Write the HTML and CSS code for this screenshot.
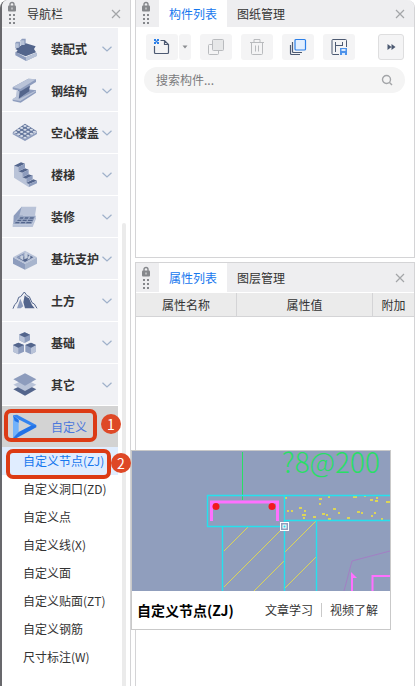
FILE: index.html
```html
<!DOCTYPE html>
<html lang="zh-CN">
<head>
<meta charset="utf-8">
<meta name="viewport" content="width=device-width, initial-scale=1">
<title>导航栏</title>
<link rel="stylesheet" href="styles.css">
</head>
<body>
<svg class="defs" aria-hidden="true">
  <symbol id="grip" viewBox="0 0 10 24">
    <path d="M3 5V3.500a2 2 0 0 1 4 0V5" fill="none" stroke="#85878b" stroke-width="1.400"/>
    <rect x="1" y="4.500" width="8" height="6" rx="1" fill="#85878b"/>
    <rect x="4.500" y="6.500" width="1" height="2" fill="#eee"/>
    <path d="M2 13h2v2H2zM6 13h2v2H6zM2 17h2v2H2zM6 17h2v2H6zM2 21h2v2H2zM6 21h2v2H6z" fill="#85878b"/>
  </symbol>
  <symbol id="close" viewBox="0 0 10 10">
    <path d="M1 1l8 8M9 1l-8 8" fill="none" stroke="#a3a5a8" stroke-width="1.200"/>
  </symbol>
  <symbol id="chevron" viewBox="0 0 10 6">
    <path d="M.5.7 5 5 9.500.7" fill="none" stroke="#9fb1ca" stroke-width="1.200"/>
  </symbol>
</svg>

<div class="app">
  <aside class="sidebar">
    <header class="bar">
      <svg class="grip"><use href="#grip"/></svg>
      <h2 class="bar-title">导航栏</h2>
      <button class="close" aria-label="关闭"><svg><use href="#close"/></svg></button>
    </header>
    <div class="scroll">
      <nav class="nav">
        <button class="item">
          <svg class="icon" viewBox="0 0 78 78">
            <path d="M10 47l31 17 33-14v10L42 75 10 58z" fill="#8d9cbd"/><path d="M42 64l32-14v10L42 75z" fill="#b7c2d7"/>
            <path d="M10 39l29-18 32 10-5 8 6 10-31 12-29-12 5-6z" fill="#53658c"/>
            <path d="M9 22l4-5h11v13l-3 5H9z" fill="#8d9cbd"/><path d="M9 22h11v13H9z" fill="#b7c2d7"/>
            <path d="M26 13l4-5h11v14l-3 5H26z" fill="#8d9cbd"/><path d="M26 13h11v14H26z" fill="#b7c2d7"/>
          </svg><span>装配式</span><svg class="chev"><use href="#chevron"/></svg>
        </button>
        <button class="item">
          <svg class="icon" viewBox="0 0 78 78">
            <path d="M2 64l46-30 24 3v7L26 74 2 69z" fill="#8d9cbd"/>
            <path d="M18 33l34-18v25L18 62z" fill="#53658c"/><path d="M30 36l25-13-7 17-30 24z" fill="#53658c"/>
            <path d="M2 28L49 2l23 2v8L26 40 2 34z" fill="#8d9cbd"/><path d="M2 28L49 2l23 2-47 29z" fill="#b9c3d8"/>
            <path d="M14 38l9 2-3 24-9-2z" fill="#b9c3d8"/><path d="M2 63l9-5 10 5 49-25 2 2-47 29-23-4z" fill="#b9c3d8"/>
          </svg><span>钢结构</span><svg class="chev"><use href="#chevron"/></svg>
        </button>
        <button class="item">
          <svg class="icon" viewBox="0 0 78 78">
            <path d="M2 38l37 19 36-21v6L39 63 2 43z" fill="#8d9cbd"/>
            <path d="M2 37l37-26 36 23-36 24z" fill="#65779d"/>
            <g fill="#d5dce8"><ellipse cx="39" cy="18" rx="5" ry="3"/><ellipse cx="29" cy="24" rx="5" ry="3"/><ellipse cx="49" cy="23" rx="5" ry="3"/><ellipse cx="20" cy="30" rx="5" ry="3"/><ellipse cx="39" cy="29" rx="5" ry="3"/><ellipse cx="58" cy="29" rx="5" ry="3"/><ellipse cx="11" cy="37" rx="5" ry="3"/><ellipse cx="29" cy="36" rx="5" ry="3"/><ellipse cx="48" cy="35" rx="5" ry="3"/><ellipse cx="67" cy="35" rx="5" ry="3"/><ellipse cx="20" cy="43" rx="5" ry="3"/><ellipse cx="39" cy="41" rx="5" ry="3"/><ellipse cx="58" cy="41" rx="5" ry="3"/><ellipse cx="29" cy="48" rx="5" ry="3"/><ellipse cx="48" cy="47" rx="5" ry="3"/><ellipse cx="39" cy="53" rx="5" ry="3"/></g>
          </svg><span>空心楼盖</span><svg class="chev"><use href="#chevron"/></svg>
        </button>
        <button class="item">
          <svg class="icon" viewBox="0 0 78 78">
            <path d="M6 11l13 4v13l12 4v14l12 3v13l8 2v12L6 47z" fill="#b9c3d8"/>
            <path d="M6 11L27 1l12 4-20 10zM19 28l20-9 11 4-19 9zM31 46l19-9 12 4-19 9zM43 62l21-10 11 4-24 10z" fill="#53658c"/>
            <path d="M19 15l20-10v14l-20 9zM31 32l19-9v14l-19 9zM43 49l19-9v12l-19 10zM51 66l24-10v8L51 75z" fill="#8d9cbd"/>
          </svg><span>楼梯</span><svg class="chev"><use href="#chevron"/></svg>
        </button>
        <button class="item">
          <svg class="icon" viewBox="0 0 78 78">
            <path d="M5 35L29 8l4 2v25L4 59z" fill="#8d9cbd"/><path d="M29 8h44l-4 27H22z" fill="#b9c3d8"/>
            <path d="M22 35h50L60 61H2z" fill="#9aa8c4"/><path d="M2 61h58l12-26v9L62 69H2z" fill="#b9c3d8"/>
            <path d="M25 40h10l-2 4H22zM39 40h11l-2 4H37zM54 40h12l-2 4H52zM18 47h11l-2 4H15zM33 47h12l-2 4H31zM49 47h14l-2 4H47zM11 54h12l-2 4H9zM28 54h12l-2 4H26zM44 54h15l-2 4H42z" fill="#53658c"/>
          </svg><span>装修</span><svg class="chev"><use href="#chevron"/></svg>
        </button>
        <button class="item">
          <svg class="icon" viewBox="0 0 78 78">
            <path d="M3 34l36 19v18L3 53z" fill="#8d9cbd"/><path d="M75 34L39 53v18l36-18z" fill="#a8b5cd"/>
            <path d="M3 34l36-20 36 20-36 20z" fill="#b9c3d8"/><path d="M14 34l25-13 25 13-25 14z" fill="#53658c"/>
            <path d="M14 34l25-13v9L20 39z" fill="#8d9cbd"/>
            <path d="M25 31l5-3 4 3v12l-9-5zM37 22l6-3 4 3v14l-10 4zM50 29l5-2v10l-9 5z" fill="#c7d0df"/>
          </svg><span>基坑支护</span><svg class="chev"><use href="#chevron"/></svg>
        </button>
        <button class="item">
          <svg class="icon" viewBox="0 0 78 78">
            <path d="M3 62l5-12 7-7 5-15 6-2 11-14 8 11 7 3 8 18 7 4 8 13" fill="none" stroke="#53658c" stroke-width="3"/>
            <path d="M15 61l10-29 9 23-8 6z" fill="#8d9cbd"/><path d="M38 22l7 6 6 3 9 20 8 10H39l-5-18z" fill="#53658c"/>
          </svg><span>土方</span><svg class="chev"><use href="#chevron"/></svg>
        </button>
        <button class="item">
          <svg class="icon" viewBox="0 0 78 78">
            <path d="M22 13L38 7l16 7v17l-16 8-16-8zM3 45l16-7 17 7v20l-17 8-16-8zM40 45l17-7 15 7v20l-15 8-17-8z" fill="#8d9cbd"/>
            <path d="M22 14l16 8v17l-16-8zM3 45l16 8v20L3 65zM72 45l-15 8v20l15-8z" fill="#b9c3d8"/>
            <path d="M22 14l16-7 16 7-16 8zM3 45l16-7 17 7-17 8zM40 45l17-7 15 7-15 8z" fill="#53658c"/>
          </svg><span>基础</span><svg class="chev"><use href="#chevron"/></svg>
        </button>
        <button class="item">
          <svg class="icon" viewBox="0 0 78 78">
            <path d="M4 52l35-17 34 17-34 19z" fill="#53658c"/><path d="M4 38l35-17 34 17-34 19z" fill="#b9c3d8"/>
            <path d="M4 22L39 4l34 18-34 19z" fill="#8d9cbd"/>
          </svg><span>其它</span><svg class="chev"><use href="#chevron"/></svg>
        </button>
        <div class="group">
          <button class="item open" aria-expanded="true">
            <svg class="icon" viewBox="0 0 78 78">
              <path d="M3 4l17 14v36L3 72z" fill="#72b2fb"/><path d="M3 4l12-2 58 31-14 3-40-20z" fill="#3484ef"/>
              <path d="M3 72l17-18 39-20 14-1v7L14 72z" fill="#2273e7"/><path d="M3 4l17 14v8L8 21z" fill="#2273e7"/>
            </svg><span>自定义</span>
          </button>
          <span class="ring" aria-hidden="true"></span><span class="step">1</span>
        </div>
      </nav>
      <ul class="sub">
        <li class="current">
          <a href="#">自定义节点(ZJ)</a>
          <span class="ring" aria-hidden="true"></span><span class="step">2</span>
          <section class="popup">
            <svg class="drawing" viewBox="0 0 258 140" role="img" aria-label="自定义节点(ZJ)">
              <rect width="258" height="140" fill="#909ebd"/>
              <text class="cad" x="150" y="22">?8@200</text>
              <g fill="none" stroke="#dcd558">
                <path d="M92 100l24-24M92 136l58-58M122 140l30-30M153 101l31-31M153 137l31-31"/>
              </g>
              <g fill="none" stroke="#dcd558" stroke-width="2">
                <path d="M153 47h2M187 48h3M196 46h2M221 46h4M232 45h2M238 49h3M243 50h3M244 47h2M254 51h4M187 53h2M167 57h3M155 60h2M159 60h2M201 58h3M190 63h3M194 64h2M170 64h4M172 60h2M171 67h2M181 66h3M196 68h3M206 62h2M215 67h3M225 61h3M229 62h2M239 65h2M242 62h2M249 68h2"/>
              </g>
              <path d="M110.500 1v48" stroke="#28df65" fill="none"/>
              <path d="M152.500 75.500H75.500v-31H258M152.500 44.500V140M153 69.500h105M90.500 76v64M184.500 70v70" fill="none" stroke="#25e1ed" stroke-width="1.400"/>
              <path d="M79.500 70V51H145.500v19" fill="none" stroke="#ff70ff" stroke-width="3"/>
              <circle cx="84" cy="55.500" r="3.500" fill="#f2181f"/><circle cx="140" cy="55.500" r="3.500" fill="#f2181f"/>
              <path d="M212 140l8-30 38-10" fill="none" stroke="#a27fc4"/>
              <path d="M220 140v-14M240.500 140v-15H258" fill="none" stroke="#ff70ff" stroke-width="2"/>
              <path d="M219 121l6 6h-6z" fill="#ff70ff"/>
              <rect x="148.500" y="71.500" width="8" height="8" fill="#909ebd" stroke="#fff"/><rect x="151" y="74" width="3" height="3" fill="#25e1ed" stroke="#fff"/>
            </svg>
            <footer class="popup-foot">
              <strong>自定义节点(ZJ)</strong>
              <a href="#">文章学习</a>
              <a href="#">视频了解</a>
            </footer>
          </section>
        </li>
        <li><a href="#">自定义洞口(ZD)</a></li>
        <li><a href="#">自定义点</a></li>
        <li><a href="#">自定义线(X)</a></li>
        <li><a href="#">自定义面</a></li>
        <li><a href="#">自定义贴面(ZT)</a></li>
        <li><a href="#">自定义钢筋</a></li>
        <li><a href="#">尺寸标注(W)</a></li>
      </ul>
      <span class="thumb" aria-hidden="true"></span>
    </div>
  </aside>

  <main class="main">
    <section class="panel components">
      <header class="bar">
        <svg class="grip"><use href="#grip"/></svg>
        <button class="tab active">构件列表</button>
        <button class="tab">图纸管理</button>
        <button class="close" aria-label="关闭"><svg><use href="#close"/></svg></button>
      </header>
      <div class="tools">
        <div class="split">
          <button class="tool" aria-label="新建">
            <svg viewBox="0 0 18 18"><path d="M7.500 2.500h4l4 4v8a1 1 0 0 1-1 1h-12a1 1 0 0 1-1-1V8M11.500 2.500v4h4" fill="none" stroke="#4d5a72" stroke-width="1.200"/><path d="M1 1h2v2H1zM4 1h2v2H4zM2.500 2.500h2v2h-2zM1 4h2v2H1zM4 4h2v2H4z" fill="#2b7fe8"/></svg>
          </button>
          <button class="drop" aria-label="更多新建"><svg viewBox="0 0 6 4"><path d="M.5.500h5L3 3.500z" fill="#8b8d91"/></svg></button>
        </div>
        <button class="tool" aria-label="复制">
          <svg viewBox="0 0 18 18"><rect x="1.500" y="6.500" width="10" height="10" rx="1" fill="none" stroke="#b9bbbe"/><rect x="5.500" y="1.500" width="11" height="11" rx="1" fill="#e6e7e8" stroke="#b9bbbe"/></svg>
        </button>
        <button class="tool" aria-label="删除">
          <svg viewBox="0 0 18 18"><path d="M2 4.500h14M6 4V1.500h6V4M3.500 5v10.500a1 1 0 0 0 1 1h9a1 1 0 0 0 1-1V5M7.500 7.500v6M10.500 7.500v6" fill="none" stroke="#b9bbbe"/></svg>
        </button>
        <button class="tool" aria-label="层间复制">
          <svg viewBox="0 0 18 18"><path d="M1.500 7v8.500a1 1 0 0 0 1 1H11M3.500 4v9.500a1 1 0 0 0 1 1H13" fill="none" stroke="#4d5a72" stroke-width="1.200"/><rect x="6" y="1.500" width="10.500" height="10.500" rx="1" fill="#e2efff" stroke="#2b7fe8" stroke-width="1.200"/></svg>
        </button>
        <button class="tool" aria-label="存档">
          <svg viewBox="0 0 18 18"><path d="M9 16.500H3a1 1 0 0 1-1-1v-13a1 1 0 0 1 1-1h12.500a1 1 0 0 1 1 1V9M5.500 4v10M5.500 7.500h7M12.500 4v4" fill="none" stroke="#4d5a72"/><path d="M10 10h7v7h-7z" fill="#4e93ea"/><path d="M11.500 11h4v2h-4zM12 15h3v2h-3z" fill="#d8e8fc"/></svg>
        </button>
        <button class="tool more" aria-label="更多">
          <svg viewBox="0 0 18 18"><path d="M5.500 6v6l4-3zM9.500 6v6l4-3z" fill="#4d5a72"/></svg>
        </button>
      </div>
      <label class="search">
        <input type="text" placeholder="搜索构件..." aria-label="搜索构件">
        <svg viewBox="0 0 12 12"><circle cx="5.500" cy="5.500" r="4" fill="none" stroke="#a3a5a8" stroke-width="1.400"/><path d="M8.500 8.500l2.500 2.500" stroke="#a3a5a8" stroke-width="1.400"/></svg>
      </label>
    </section>

    <section class="panel props">
      <header class="bar">
        <svg class="grip"><use href="#grip"/></svg>
        <button class="tab active">属性列表</button>
        <button class="tab">图层管理</button>
        <button class="close" aria-label="关闭"><svg><use href="#close"/></svg></button>
      </header>
      <table class="grid">
        <thead><tr><th class="name">属性名称</th><th>属性值</th><th class="extra">附加</th></tr></thead>
      </table>
    </section>
  </main>
</div>
</body>
</html>
```
FILE: styles.css
```css
* { box-sizing: border-box; }

body {
  margin: 0;
  background: #fff;
  color: #333;
  font: 12px/18px "Noto Sans CJK SC", "Noto Sans", sans-serif;
}

button, input {
  border: 0;
  padding: 0;
  margin: 0;
  background: none;
  color: inherit;
  font: inherit;
}

a { color: inherit; text-decoration: none; }
svg { display: block; flex: none; }
.defs { position: absolute; width: 0; height: 0; }

.app {
  display: flex;
  gap: 4px;
  min-height: 100vh;
  padding-right: 3px;
}

.sidebar {
  flex: none;
  width: 131px;
  border-left: 2px solid #68686c;
  border-right: 1px solid #d4d4d6;
  border-top-left-radius: 8px;
}

.bar {
  display: flex;
  align-items: stretch;
  height: 27px;
  background: #eeeef0;
}
.sidebar .bar { border-top-left-radius: 6px; }
.grip { width: 10px; height: 24px; margin: 1px 8px 0 5px; }
.sidebar .grip { margin: 1px 10px 0 5px; }
.bar-title { margin: 0; font: inherit; line-height: 27px; }
.close { width: 28px; margin-left: auto; display: grid; place-items: center; }
.close svg { width: 10px; height: 10px; }

.scroll { position: relative; }
.nav { display: grid; gap: 1px; padding: 1px 12px 0 0; }
.item {
  display: flex;
  align-items: center;
  width: 100%;
  height: 41px;
  padding: 0 6px 0 10px;
  background: #f0f1f5;
  font-weight: 700;
  white-space: nowrap;
}
.icon { width: 26px; height: 26px; margin-right: 13px; }
.chev { width: 10px; height: 6px; margin-left: auto; }
.group { position: relative; }
.item.open { background: #d3d3d3; color: #4c78dc; font-weight: 400; }

.sub { list-style: none; margin: 0; padding: 0 12px 0 0; }
.sub li { position: relative; height: 28px; }
.sub li > a { display: block; padding: 5px 0; white-space: nowrap; padding-left: 21px; }
.sub .current { background: #e0edff; }
.sub .current > a { color: #1677ee; }

.thumb {
  position: absolute;
  top: 196px;
  right: 4px;
  bottom: -20px;
  width: 4px;
  border-radius: 2px 2px 0 0;
  background: #ebebeb;
}

.ring {
  position: absolute;
  inset: 3px 21px 5px 2px;
  border: 4px solid #dc3b15;
  border-radius: 7px;
  pointer-events: none;
}
.current .ring { inset: 2px 7px -4px 4px; z-index: 1; }
.step {
  position: absolute;
  top: 8px;
  left: 99px;
  width: 20px;
  height: 20px;
  border-radius: 50%;
  background: #de4826;
  color: #fff;
  font-size: 14px;
  line-height: 20px;
  text-align: center;
}
.current .step { top: 6px; left: 109px; z-index: 3; }

.popup {
  position: absolute;
  top: 3px;
  left: 129px;
  z-index: 2;
  width: 260px;
  border: 1px solid #c9c9c9;
  background: #fff;
}
.drawing { width: 100%; height: auto; }
.cad {
  fill: #28df65;
  font-family: "Noto Sans CJK SC", sans-serif;
  font-size: 28px;
  font-weight: 300;
}
.popup-foot { display: flex; align-items: center; height: 38px; padding: 0 12px 0 5px; }
.popup-foot strong { margin-right: auto; color: #000; font-size: 14px; }
.popup-foot a + a { margin-left: 8px; padding-left: 8px; border-left: 1px solid #c9c9c9; line-height: 14px; }

.main { flex: 1; min-width: 0; display: flex; flex-direction: column; gap: 4px; }
.panel { border: 1px solid #d4d4d6; }
.components { height: 258px; border-top: 0; border-top-right-radius: 8px; }
.components .bar { border-top-right-radius: 7px; }
.props { flex: 1; border-bottom: 0; }
.props .bar { height: 30px; border-bottom: 1px solid #fff; }
.props .grip { margin-top: 3px; }
.tab { padding: 0 10px; }
.tab.active { background: #fff; color: #1677ee; }

.tools { display: flex; gap: 9px; padding: 7px 10px 0; }
.tool, .drop { display: grid; place-items: center; height: 26px; border-radius: 3px; background: #f4f4f5; }
.tool { width: 32px; }
.tool svg { width: 18px; height: 18px; }
.split { display: flex; gap: 1px; }
.drop { width: 12px; }
.drop svg { width: 6px; height: 4px; }
.more { width: 26px; margin-left: auto; border: 1px solid #dededf; }

.search {
  display: flex;
  align-items: center;
  height: 26px;
  margin: 7px 9px 0 8px;
  padding: 0 12px;
  border-radius: 13px;
  background: #f4f4f4;
}
.search input { flex: 1; min-width: 0; outline: 0; }
.search input::placeholder { color: #7b7b7d; opacity: 1; }
.search svg { width: 12px; height: 12px; }

.grid { width: 100%; border-collapse: separate; border-spacing: 0; table-layout: fixed; }
.grid th {
  height: 24px;
  padding: 0;
  border-right: 1px solid #d4d4d6;
  border-bottom: 1px solid #d4d4d6;
  background: #ebebeb;
  font-weight: 400;
}
.grid th:last-child { border-right: 0; }
.grid .name { width: 101px; }
.grid .extra { width: 41px; }
```
